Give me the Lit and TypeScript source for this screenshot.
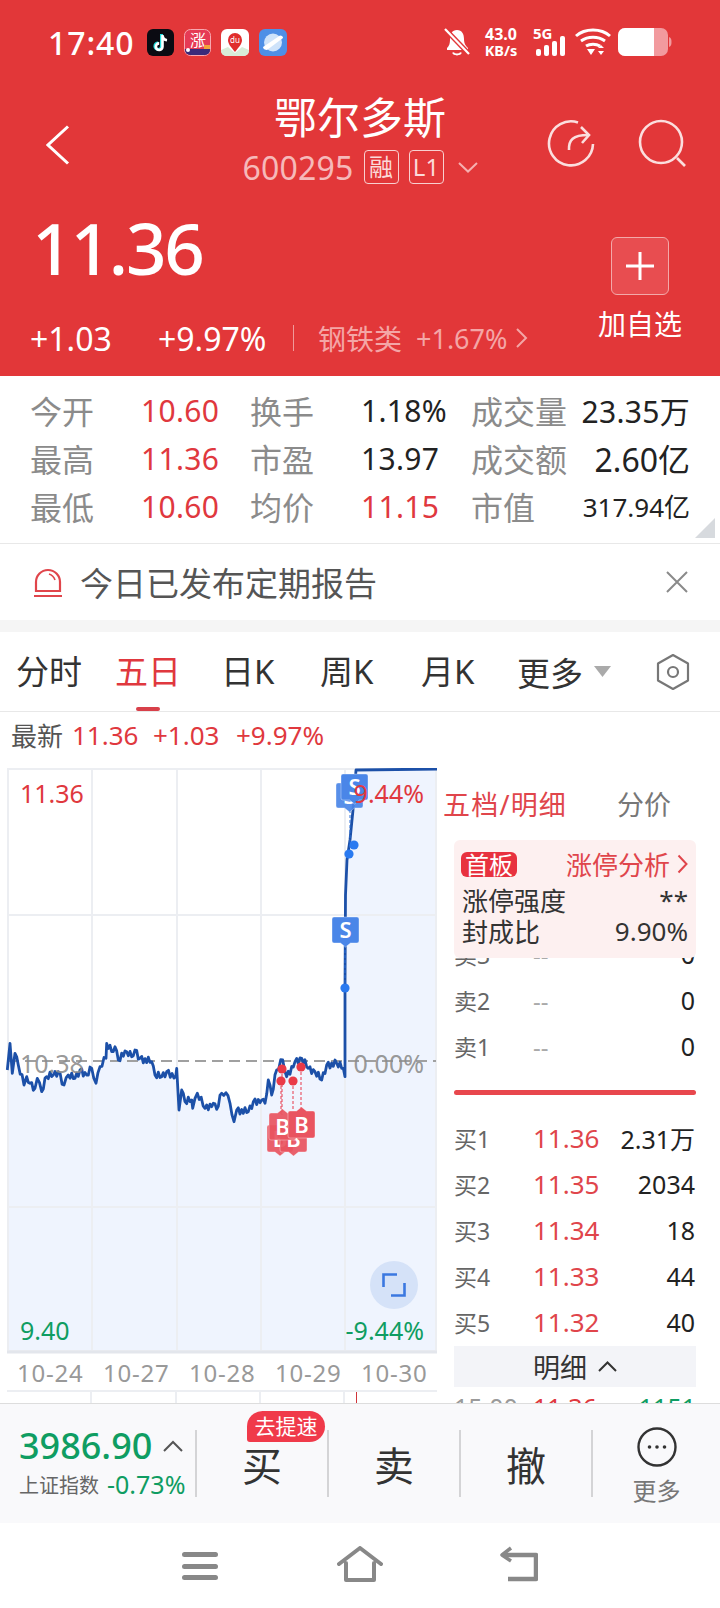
import { LitElement, html, css, svg } from "lit";
import { customElement } from "lit/decorators.js";

const RAW: [number, number][] = [[22,930],[30,850],[37,940],[45,880],[55,915],[72,975],[80,950],[90,970],[105,985],[112,955],[125,995],[140,950],[160,945],[175,935],[192,975],[205,945],[225,955],[240,930],[260,945],[275,925],[288,970],[300,920],[318,895],[320,850],[335,875],[345,860],[355,900],[380,875],[395,890],[405,870],[420,895],[455,905],[465,945],[485,950],[500,935],[527,950],[530,925],[537,1050],[545,990],[555,1025],[575,1020],[578,1045],[592,1000],[615,1045],[640,1030],[650,1048],[665,1000],[678,998],[690,1030],[702,1085],[710,1050],[745,1055],[760,1025],[785,1020],[795,1030],[805,960],[815,1005],[830,930],[848,900],[860,950],[885,905],[905,895],[925,925],[945,935],[965,960],[980,915],[1010,910],[1030,925],[1035,950]];

function buildLine(): string {
  const out: string[] = [];
  let flip = 1;
  RAW.forEach(([x, y], i) => {
    out.push(`${(x / 3).toFixed(1)},${(760 + y / 3).toFixed(1)}`);
    const next = RAW[i + 1];
    if (next && next[0] - x > 9) {
      const steps = Math.floor((next[0] - x) / 5);
      for (let s = 1; s < steps; s++) {
        const t = s / steps;
        flip = -flip;
        const nx = (x + (next[0] - x) * t) / 3;
        const ny = 760 + (y + (next[1] - y) * t) / 3 + flip * ((s % 3) + 1) * 1.2;
        out.push(`${nx.toFixed(1)},${ny.toFixed(1)}`);
      }
    }
  });
  out.push("345,988", "345.5,895", "347,860", "350,840", "353,810", "356,770", "437,769");
  return out.join(" ");
}
const LINE = buildLine();
const FILL = `${LINE} 437,1352 7,1352`;

function tag(x: number, y: number, w: number, h: number, color: string, label: string, up: boolean, op = 1) {
  const cx = x + w / 2;
  const d = up
    ? `M${x + 2} ${y} H${cx - 5} L${cx} ${y - 4} L${cx + 5} ${y} H${x + w - 2} Q${x + w} ${y} ${x + w} ${y + 2} V${y + h - 2} Q${x + w} ${y + h} ${x + w - 2} ${y + h} H${x + 2} Q${x} ${y + h} ${x} ${y + h - 2} V${y + 2} Q${x} ${y} ${x + 2} ${y}Z`
    : `M${x + 2} ${y} H${x + w - 2} Q${x + w} ${y} ${x + w} ${y + 2} V${y + h - 2} Q${x + w} ${y + h} ${x + w - 2} ${y + h} H${cx + 5} L${cx} ${y + h + 4} L${cx - 5} ${y + h} H${x + 2} Q${x} ${y + h} ${x} ${y + h - 2} V${y + 2} Q${x} ${y} ${x + 2} ${y}Z`;
  return svg`<path d=${d} fill=${color} stroke="#ffffff" stroke-opacity=".45" stroke-width=".8" opacity=${op}/>
    <text x=${cx} y=${y + h / 2 + 8} text-anchor="middle" font-size="22" font-weight="600" fill="#fff" font-family="Noto Sans, sans-serif">${label}</text>`;
}

const STATS = [
  ["今开", "10.60", "换手", "1.18%", "成交量", "23.35万"],
  ["最高", "11.36", "市盈", "13.97", "成交额", "2.60亿"],
  ["最低", "10.60", "均价", "11.15", "市值", "317.94亿"],
];

@customElement("app-root")
export class AppRoot extends LitElement {
  static styles = css`
    :host { display: block; width: 720px; height: 1608px; overflow: hidden; background: #fff; position: relative;
      font-family: "Noto Sans", "Noto Sans CJK SC", sans-serif; color: #222; }
    svg { display: block; flex: none; }

    .head { height: 376px; background: #e23739; color: #fff; display: flex; flex-direction: column; }
    .status { height: 84px; display: flex; align-items: center; padding-left: 48px; position: relative; }
    .time { font-size: 32px; font-weight: 500; width: 99px; letter-spacing: .9px; white-space: nowrap; }
    .appicons { display: flex; gap: 10px; }
    .sright { margin-left: auto; display: flex; align-items: center; padding-right: 48px; }
    .speed { display: flex; flex-direction: column; align-items: center; margin: 0 13px 0 11px; font-weight: 700; line-height: 16px; width: 38px; }
    .speed b { font-size: 16px; font-weight: 700; }
    .speed span { font-size: 14.5px; }

    .nav { height: 100px; display: grid; grid-template-columns: 1fr auto 1fr; padding-top: 10px; box-sizing: border-box; }
    .navl { padding: 31px 0 0 46px; }
    .navc { display: flex; flex-direction: column; align-items: center; }
    .title { font-size: 43px; line-height: 48px; white-space: nowrap; }
    .sub { display: flex; align-items: center; margin-top: 8px; height: 34px; color: #f6b9b9; font-size: 32px; white-space: nowrap; }
    .code { letter-spacing: .2px; }
    .bdg { border: 1px solid #f8d0d0; border-radius: 4px; height: 32px; width: 33px; margin-left: 10px; display: flex; align-items: center; justify-content: center; font-size: 24px; color: #fbdada; line-height: 1; }
    .sub .chev { margin-left: 14px; }
    .navr { display: flex; justify-content: flex-end; gap: 42px; padding: 25px 34px 0 0; }

    .price { flex: 1; display: flex; justify-content: space-between; }
    .pl { padding-left: 30px; }
    .big { font-size: 71px; line-height: 72px; font-weight: 500; margin: 28px 0 0 2px; letter-spacing: -2.2px; }
    .chg { display: flex; align-items: center; height: 40px; margin-top: 34px; font-size: 32px; white-space: nowrap; }
    .chg .a { width: 128px; }
    .chg .b { width: 135px; }
    .chg .sep { width: 1px; height: 26px; background: #f09a9a; margin-right: 24px; }
    .chg .c { color: #f4a6a6; font-size: 28px; width: 98px; }
    .chg .d { color: #f4a6a6; font-size: 27px; width: 99px; }
    .pr { width: 100px; margin-right: 30px; display: flex; flex-direction: column; align-items: center; }
    .add { width: 58px; height: 58px; box-sizing: border-box; margin-top: 53px; border: 1px solid #f3a9a9; border-radius: 6px; background: #e84d50; display: flex; align-items: center; justify-content: center; }
    .addl { font-size: 28px; line-height: 30px; margin-top: 14px; white-space: nowrap; }

    .stats { box-sizing: border-box; padding: 10px 30px 0; display: grid; grid-template-columns: 111px 109px 111px 110px 1fr; grid-auto-rows: 48px; align-items: center; position: relative; border-bottom: 1px solid #e8e8e8; height: 168px; white-space: nowrap; }
    .lab { font-size: 32px; color: #8b8b8b; }
    .val { font-size: 30px; color: #222; letter-spacing: .3px; }
    .wide { font-size: 32px; letter-spacing: 0; }
    .red { color: #e0383e; }
    .green { color: #0f9d62; }
    .small { font-size: 26px; letter-spacing: 0; }
    .line3 { display: flex; justify-content: space-between; align-items: center; }
    .tri { position: absolute; right: 5px; bottom: 5px; width: 0; height: 0; border-left: 20px solid transparent; border-bottom: 20px solid #d7dade; }

    .notice { height: 76px; display: flex; align-items: center; padding-left: 33px; padding-right: 32px; }
    .notice .txt { font-size: 33px; color: #555; margin-left: 17px; flex: 1; white-space: nowrap; }
    .band { height: 12px; background: #f5f5f5; }

    .tabs { height: 80px; box-sizing: border-box; border-bottom: 1px solid #e8e8e8; display: grid; grid-template-columns: 99px 106px 99px 101px 96px 1fr; padding-left: 16px; align-items: center; font-size: 33px; color: #333; white-space: nowrap; }
    .tab { position: relative; height: 79px; line-height: 80px; }
    .tab.on { color: #e0383e; }
    .tab.on::after { content: ""; position: absolute; left: 21px; bottom: 0; width: 24px; height: 4px; border-radius: 2px; background: #d8404a; }
    .more { display: flex; align-items: center; }
    .more .hex { margin-left: 44px; }
    .more .dn { margin-left: 11px; }

    .latest { height: 56px; padding: 0 0 10px 11px; box-sizing: border-box; display: flex; align-items: center; font-size: 26px; white-space: nowrap; }
    .latest .n { color: #555; width: 61px; }
    .latest span.p1 { width: 81px; }
    .latest span.p2 { width: 83px; }

    .main { height: 635px; display: flex; overflow: hidden; }
    .left { width: 443px; flex: none; position: relative; }
    .chart { width: 440px; height: 586px; position: relative; }
    .cl { position: absolute; font-size: 25px; line-height: 28px; white-space: nowrap; }
    .c11 { left: 20px; top: 11px; }
    .c12 { right: 16px; top: 11px; }
    .c21 { left: 20px; top: 281px; }
    .c22 { right: 16px; top: 281px; }
    .c31 { left: 20px; top: 548px; }
    .c32 { right: 16px; top: 548px; }
    .gray { color: rgba(140,140,140,.9); }
    .expand { position: absolute; left: 370px; top: 493px; width: 48px; height: 48px; border-radius: 50%; background: #d5e2f8; display: flex; align-items: center; justify-content: center; }
    .axis { height: 36px; margin-left: 17px; display: grid; grid-template-columns: repeat(5, 86px); align-items: center; font-size: 24px; color: #999; letter-spacing: .8px; white-space: nowrap; }
    .lower { height: 13px; width: 430px; margin-left: 7px; display: grid; grid-template-columns: 85px 85px 84px 84px 92px; border-top: 2px solid #eceef2; box-sizing: border-box; }
    .lower i { border-right: 2px solid #eceef2; }
    .lower i.t { border-right: 0; position: relative; }
    .lower i.t::after { content: ""; position: absolute; left: 11px; top: 0; bottom: 0; width: 1px; background: #d0343a; }

    .right { flex: 1; padding: 0 24px 0 11px; display: flex; flex-direction: column; position: relative; min-width: 0; }
    .right > * { flex: none; }
    .rtabs { height: 72px; display: flex; align-items: center; font-size: 27px; white-space: nowrap; padding-bottom: 2px; box-sizing: border-box; }
    .rtabs .r1 { color: #e0454b; width: 174px; letter-spacing: 1.2px; margin-left: -11px; }
    .rtabs .r2 { color: #777; font-size: 27px; }
    .card { background: #fdf0f0; border-radius: 6px; height: 118px; box-sizing: border-box; padding: 10px 8px 0 8px; font-size: 26px; color: #333; position: relative; z-index: 1; }
    .cr { display: flex; justify-content: space-between; align-items: center; white-space: nowrap; }
    .cr1 { height: 28px; margin-bottom: 6px; color: #e0454b; }
    .cr2 { height: 31px; }
    .fb { background: #e8323f; color: #fff; border-radius: 6px; width: 56px; height: 25px; font-size: 24px; line-height: 25px; text-align: center; margin-left: -1px; }
    .al { display: flex; align-items: center; gap: 7px; }
    .book { display: flex; flex-direction: column; }
    .row { height: 46px; display: grid; grid-template-columns: 79px 1fr auto; align-items: center; white-space: nowrap; font-size: 25px; color: #222; padding-right: 1px; }
    .row .k { font-size: 23px; color: #666; }
    .row .pv { font-size: 26px; color: #e0454b; }
    .row .dash { color: #aaa; font-size: 24px; }
    .hide { margin-top: -27px; }
    .rbar { height: 5px; background: #e8474d; border-radius: 3px; margin: 21px 0 20px; }
    .detail { height: 41px; background: #f3f4f8; display: flex; align-items: center; justify-content: center; gap: 11px; font-size: 27px; color: #333; margin-top: 1px; }
    .tick { display: grid; grid-template-columns: 79px 1fr auto; font-size: 25px; margin-top: 3px; white-space: nowrap; }

    .bottom { height: 120px; box-sizing: border-box; border-top: 1px solid #ddd; background: #f9f9fb; display: flex; position: relative; }
    .quote { width: 195px; flex: none; box-sizing: border-box; padding: 20px 0 0 19px; white-space: nowrap; }
    .q1 { display: flex; align-items: center; gap: 11px; font-size: 36px; line-height: 44px; font-weight: 500; color: #0f9d62; }
    .q2 { display: flex; align-items: center; gap: 8px; margin-top: 1px; height: 30px; }
    .q2 span:first-child { font-size: 20px; color: #666; }
    .q2 span:last-child { font-size: 25px; color: #0f9d62; }
    .act { width: 132px; flex: none; height: 67px; margin-top: 26px; border-left: 2px solid #d4d4d6; box-sizing: border-box; display: flex; align-items: center; justify-content: center; font-size: 40px; color: #333; position: relative; }
    .badge { position: absolute; left: 50px; top: -19px; width: 78px; height: 31px; background: #f03a4a; color: #fff; font-size: 21px; line-height: 31px; text-align: center; border-radius: 16px 16px 16px 3px; white-space: nowrap; }
    .moreb { flex-direction: column; justify-content: flex-start; font-size: 24px; color: #777; width: auto; flex: 1; overflow: visible; height: 67px; }
    .moreb span { margin-top: 9px; line-height: 30px; white-space: nowrap; }
    .moreb svg { margin-top: -3px; }

    .sysnav { height: 85px; box-sizing: border-box; padding: 23px 0 0 182px; display: flex; align-items: flex-start; }
    .sysnav .h { margin-left: 119px; }
    .sysnav .b { margin-left: 117px; }
    .gap5 { margin-left: 5px; }
    .gap6 { margin-left: 6px; }
    .nudge { margin-right: -2px; }
  `;

  private statusIcons() {
    return html`<div class="appicons">
      <svg width="27" height="27" viewBox="0 0 27 27"><rect width="27" height="27" rx="6" fill="#0b0b12"/>
        <path d="M14.5 5v12.2a3.3 3.3 0 1 1-3.3-3.3" fill="none" stroke="#25e0e0" stroke-width="3"/>
        <path d="M15.5 6v11.7a3.3 3.3 0 1 1-3.3-3.3M15.5 7c.4 2.4 2 4 4.5 4.3" fill="none" stroke="#fff" stroke-width="2.6"/></svg>
      <svg width="27" height="27" viewBox="0 0 27 27"><rect x=".5" y=".5" width="26" height="26" rx="6" fill="#e63a55" stroke="#f7a8b0"/>
        <path d="M1 20h25v1a5 5 0 0 1-5 5H6a5 5 0 0 1-5-5z" fill="#3a2a7a"/>
        <text x="14" y="17" text-anchor="middle" font-size="16" fill="#fff" font-family="Noto Sans CJK SC, sans-serif">涨</text>
        <circle cx="4" cy="21" r="2" fill="#fff"/><rect x="20" y="16" width="6" height="4" fill="#f3a33a"/></svg>
      <svg width="28" height="27" viewBox="0 0 28 27"><rect width="28" height="27" rx="6" fill="#fff"/>
        <path d="M0 21l7-3 7 6 7-6 7 3v1a5 5 0 0 1-5 5H5a5 5 0 0 1-5-5z" fill="#d8ecd8"/>
        <path d="M14 23c-4-5-7-8-7-12a7 7 0 0 1 14 0c0 4-3 7-7 12z" fill="#e02d2d"/>
        <text x="14" y="14" text-anchor="middle" font-size="8" fill="#fff" font-family="Noto Sans, sans-serif">du</text></svg>
      <svg width="28" height="27" viewBox="0 0 28 27"><rect width="28" height="27" rx="6" fill="#4e8fe6"/>
        <circle cx="14" cy="13.5" r="9" fill="#cfe3fa"/>
        <path d="M4 18L21 6.5c2 0 3 1 3 2.5L8 21c-2 0-4-1-4-3z" fill="#fff"/></svg>
    </div>`;
  }

  private statusRight() {
    return html`<div class="sright">
      <svg width="27" height="30" viewBox="0 0 27 30">
        <path d="M13 3c5 0 7 4 7 9 0 5 2 7 4 9v2H3v-2c2-2 3-4 3-9 0-5 2-9 7-9z" fill="#fff"/>
        <path d="M9 25.5c1 2.5 7 2.5 8 0" fill="none" stroke="#fff" stroke-width="2"/>
        <path d="M1 2l24 25" stroke="#e23739" stroke-width="5"/><path d="M1 2l24 25" stroke="#fff" stroke-width="2.2"/></svg>
      <div class="speed"><b>43.0</b><span>KB/s</span></div>
      <svg width="36" height="30" viewBox="0 0 36 30">
        <text x="0" y="12" font-size="15" font-weight="700" fill="#fff" font-family="Noto Sans, sans-serif">5G</text>
        <rect x="3" y="22" width="5" height="7" rx="2" fill="#fff"/><rect x="11" y="18" width="5" height="11" rx="2" fill="#fff"/>
        <rect x="19" y="14" width="5" height="15" rx="2" fill="#fff"/><rect x="27" y="9" width="5" height="20" rx="2" fill="#fff"/></svg>
      <svg class="gap5" width="38" height="30" viewBox="0 0 38 30">
        <path d="M2 9C11 1 27 1 36 9M7 14c7-5 17-5 24 0M12 19c4-2.500 10-2.500 14 0" fill="none" stroke="#fff" stroke-width="3"/>
        <path d="M13 22h8l-4 6zM24 21l3-3 3 3zM24 24h6l-3 4z" fill="#fff"/></svg>
      <svg class="gap6" width="54" height="30" viewBox="0 0 54 30">
        <rect x="0" y="1" width="50" height="28" rx="7" fill="#f29a9e"/>
        <path d="M7 1h29v28H7a7 7 0 0 1-7-7V8a7 7 0 0 1 7-7z" fill="#fff"/>
        <path d="M51 10c2 1 2.500 2 2.500 5s-.5 4-2.500 5z" fill="#f29a9e"/></svg>
    </div>`;
  }

  private chart() {
    const vx = [92, 177, 261, 345];
    return html`<div class="chart">
      <svg width="440" height="586" viewBox="0 768 440 586">
        <polygon points=${FILL} fill="#eff4fe"/>
        <g stroke="#eceef2" stroke-width="2" fill="none">
          <rect x="8" y="769" width="428" height="582"/>
          ${vx.map((x) => svg`<line x1=${x} x2=${x} y1="769" y2="1352"/>`)}
          <line x1="8" x2="436" y1="915" y2="915"/>
          <line x1="8" x2="436" y1="1207" y2="1207"/>
        </g>
        <line x1="7" x2="437" y1="1352" y2="1352" stroke="#e3e6ec" stroke-width="3"/>
        <line x1="8" x2="436" y1="1061" y2="1061" stroke="#a0a0a0" stroke-width="2" stroke-dasharray="11 6"/>
        <polyline points=${LINE} fill="none" stroke="#1c50a8" stroke-width="2.800" stroke-linejoin="round"/>
        <g stroke="#e8394a" stroke-width="1" stroke-dasharray="3 2">
          <line x1="282" x2="282" y1="1069" y2="1115"/><line x1="281" x2="281" y1="1081" y2="1115"/>
          <line x1="293" x2="293" y1="1081" y2="1115"/><line x1="301" x2="301" y1="1067" y2="1110"/>
        </g>
        <g stroke="#2a6fd8" stroke-width="1" stroke-dasharray="3 2">
          <line x1="350" x2="350" y1="810" y2="854"/><line x1="345" x2="345" y1="945" y2="988"/>
        </g>
        ${tag(267, 1125, 26, 27, "#e95460", "B", false, 0.92)}
        ${tag(280, 1125, 27, 27, "#e95460", "B", false, 0.92)}
        ${tag(269, 1113, 27, 27, "#e95460", "B", true, 0.92)}
        ${tag(288, 1111, 27, 27, "#e95460", "B", true)}
        ${tag(336, 783, 27, 25, "#4a86e8", "S", false, 0.92)}
        ${tag(341, 774, 27, 26, "#4a86e8", "S", false)}
        ${tag(332, 917, 27, 26, "#4a86e8", "S", false)}
        ${[[282, 1069], [281, 1081], [293, 1081], [301, 1067]].map(([x, y]) => svg`<circle cx=${x} cy=${y} r="4.600" fill="#ea3a47"/>`)}
        ${[[345, 988], [349, 854], [354, 845]].map(([x, y]) => svg`<circle cx=${x} cy=${y} r="4.600" fill="#2a7af0"/>`)}
      </svg>
      <div class="cl red c11">11.36</div>
      <div class="cl red c12">9.44%</div>
      <div class="cl gray c21">10.38</div>
      <div class="cl gray c22">0.00%</div>
      <div class="cl green c31">9.40</div>
      <div class="cl green c32">-9.44%</div>
      <div class="expand"><svg width="24" height="24" viewBox="0 0 24 24" fill="none" stroke="#3b78e0" stroke-width="2.600">
        <path d="M1.500 14V1.500H15M22.500 10V22.500H9"/></svg></div>
    </div>`;
  }

  private book() {
    const sells = [["卖3", "--", "0"], ["卖2", "--", "0"], ["卖1", "--", "0"]];
    const buys = [["买1", "11.36", "2.31万"], ["买2", "11.35", "2034"], ["买3", "11.34", "18"], ["买4", "11.33", "44"], ["买5", "11.32", "40"]];
    return html`<div class="book">
      <div class="hide">${sells.map((r) => html`<div class="row"><span class="k">${r[0]}</span><span class="dash">${r[1]}</span><span>${r[2]}</span></div>`)}</div>
      <div class="rbar"></div>
      ${buys.map((r) => html`<div class="row"><span class="k">${r[0]}</span><span class="pv">${r[1]}</span><span>${r[2]}</span></div>`)}
    </div>`;
  }

  render() {
    return html`
      <div class="head">
        <div class="status"><div class="time">17:40</div>${this.statusIcons()}${this.statusRight()}</div>
        <div class="nav">
          <div class="navl"><svg width="24" height="40" viewBox="0 0 24 40" fill="none" stroke="#fff" stroke-width="3"><path d="M22 1.500L2 20l20 18.500"/></svg></div>
          <div class="navc">
            <div class="title">鄂尔多斯</div>
            <div class="sub"><span class="code">600295</span><span class="bdg">融</span><span class="bdg">L1</span>
              <svg class="chev" width="20" height="11" viewBox="0 0 20 11" fill="none" stroke="#f6b0b0" stroke-width="2"><path d="M1 1l9 8.500L19 1"/></svg></div>
          </div>
          <div class="navr">
            <svg width="50" height="50" viewBox="0 0 50 50" fill="none" stroke="#fbdede" stroke-width="2.600">
              <path d="M32 3.500A22 22 0 1 0 47 25"/><path d="M23 31c-.5-10 4-15 19-15"/><path d="M35 8l8 8-7 8"/></svg>
            <svg class="nudge" width="50" height="50" viewBox="0 0 50 50" fill="none" stroke="#fbdede" stroke-width="2.600">
              <circle cx="23" cy="23" r="21"/><path d="M39 39l8 8"/></svg>
          </div>
        </div>
        <div class="price">
          <div class="pl">
            <div class="big">11.36</div>
            <div class="chg"><span class="a">+1.03</span><span class="b">+9.97%</span><span class="sep"></span><span class="c">钢铁类</span><span class="d">+1.67%</span>
              <svg width="13" height="22" viewBox="0 0 13 22" fill="none" stroke="#f4a6a6" stroke-width="2"><path d="M2 2l9 9-9 9"/></svg></div>
          </div>
          <div class="pr">
            <div class="add"><svg width="30" height="30" viewBox="0 0 30 30" stroke="#fff" stroke-width="3"><path d="M15 1v28M1 15h28"/></svg></div>
            <div class="addl">加自选</div>
          </div>
        </div>
      </div>

      <div class="stats">
        ${STATS.map((r, i) => html`
          <span class="lab">${r[0]}</span><span class="val red">${r[1]}</span>
          <span class="lab">${r[2]}</span><span class="val ${i === 2 ? "red" : ""}">${r[3]}</span>
          <span class="line3"><span class="lab">${r[4]}</span><span class="val ${i === 2 ? "small" : i === 1 ? "wide" : ""}">${r[5]}</span></span>`)}
        <div class="tri"></div>
      </div>

      <div class="notice">
        <svg width="30" height="30" viewBox="0 0 30 30" fill="none" stroke="#e0454b" stroke-width="2.200">
          <path d="M3 24V15a12 12 0 0 1 24 0v9zM1 29h28"/><path d="M16 7c3 1 5 3 6 6" stroke-width="1.600"/></svg>
        <div class="txt">今日已发布定期报告</div>
        <svg width="22" height="22" viewBox="0 0 22 22" stroke="#8a8a8a" stroke-width="2"><path d="M1 1l20 20M21 1L1 21"/></svg>
      </div>
      <div class="band"></div>

      <div class="tabs">
        <div class="tab">分时</div><div class="tab on">五日</div><div class="tab">日K</div><div class="tab">周K</div><div class="tab">月K</div>
        <div class="more"><span>更多</span>
          <svg class="dn" width="17" height="11" viewBox="0 0 17 11"><path d="M0 0h17l-8.500 11z" fill="#aaa"/></svg>
          <svg class="hex" width="36" height="38" viewBox="0 0 36 38" fill="none" stroke="#777" stroke-width="2.200">
            <path d="M18 2l15 8.500v17L18 36 3 27.500v-17z" stroke-linejoin="round"/><circle cx="18" cy="19" r="5"/></svg></div>
      </div>

      <div class="latest"><span class="n">最新</span><span class="red p1">11.36</span><span class="red p2">+1.03</span><span class="red">+9.97%</span></div>

      <div class="main">
        <div class="left">
          ${this.chart()}
          <div class="axis"><span>10-24</span><span>10-27</span><span>10-28</span><span>10-29</span><span>10-30</span></div>
          <div class="lower"><i></i><i></i><i></i><i></i><i class="t"></i></div>
        </div>
        <div class="right">
          <div class="rtabs"><span class="r1">五档/明细</span><span class="r2">分价</span></div>
          <div class="card">
            <div class="cr cr1"><span class="fb">首板</span><span class="al">涨停分析<svg width="11" height="20" viewBox="0 0 11 20" fill="none" stroke="#e0454b" stroke-width="2"><path d="M1.500 1.500l8 8.500-8 8.500"/></svg></span></div>
            <div class="cr cr2"><span>涨停强度</span><span>**</span></div>
            <div class="cr cr2"><span>封成比</span><span>9.90%</span></div>
          </div>
          ${this.book()}
          <div class="detail"><span>明细</span><svg width="19" height="11" viewBox="0 0 19 11" fill="none" stroke="#333" stroke-width="2"><path d="M1 10l8.500-8.500L18 10"/></svg></div>
          <div class="tick"><span class="gray">15:00</span><span class="red">11.36</span><span class="green">1151</span></div>
        </div>
      </div>

      <div class="bottom">
        <div class="quote">
          <div class="q1"><span>3986.90</span><svg width="20" height="12" viewBox="0 0 20 12" fill="none" stroke="#555" stroke-width="2"><path d="M1 11l9-9 9 9"/></svg></div>
          <div class="q2"><span>上证指数</span><span>-0.73%</span></div>
        </div>
        <div class="act">买<div class="badge">去提速</div></div>
        <div class="act">卖</div>
        <div class="act">撤</div>
        <div class="act moreb">
          <svg width="40" height="40" viewBox="0 0 40 40" fill="none" stroke="#333" stroke-width="2.400"><circle cx="20" cy="20" r="18.500"/>
            <g fill="#333" stroke="none"><circle cx="12.500" cy="20" r="1.800"/><circle cx="20" cy="20" r="1.800"/><circle cx="27.500" cy="20" r="1.800"/></g></svg>
          <span>更多</span>
        </div>
      </div>

      <div class="sysnav">
        <svg width="36" height="35" viewBox="0 0 36 35"><g fill="#888"><rect y="6" width="36" height="5" rx="2.500"/><rect y="18" width="36" height="5" rx="2.500"/><rect y="29" width="36" height="5" rx="2.500"/></g></svg>
        <svg class="h" width="46" height="36" viewBox="0 0 46 36" fill="none" stroke="#888" stroke-width="4" stroke-linejoin="round" stroke-linecap="round"><path d="M2 18L23 2l21 16M9 17v17h28V17"/></svg>
        <svg class="b" width="38" height="36" viewBox="0 0 38 36" fill="none" stroke="#888" stroke-width="4.500" stroke-linejoin="round"><path d="M4 9h32v24H8"/><path d="M11 2L2 9l9 6" stroke-width="3.500"/></svg>
      </div>
    `;
  }
}
